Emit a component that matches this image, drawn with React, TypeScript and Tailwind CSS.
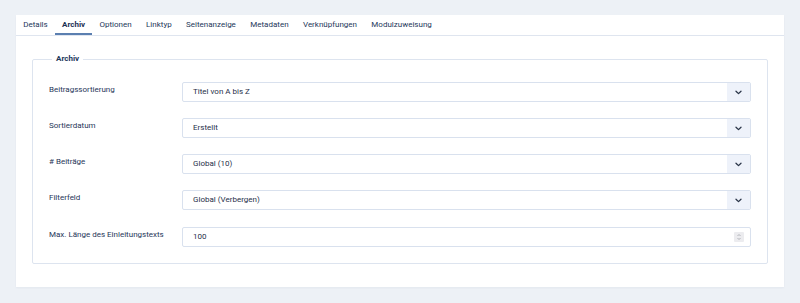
import React, { useState } from 'react';

const tabs = ['Details', 'Archiv', 'Optionen', 'Linktyp', 'Seitenanzeige', 'Metadaten', 'Verknüpfungen', 'Modulzuweisung'];

interface Field {
  label: string;
  value: string;
  kind: 'select' | 'number';
}

const fields: Field[] = [
  { label: 'Beitragssortierung', value: 'Titel von A bis Z', kind: 'select' },
  { label: 'Sortierdatum', value: 'Erstellt', kind: 'select' },
  { label: '# Beiträge', value: 'Global (10)', kind: 'select' },
  { label: 'Filterfeld', value: 'Global (Verbergen)', kind: 'select' },
  { label: 'Max. Länge des Einleitungstexts', value: '100', kind: 'number' },
];

const Chevron = () => (
  <svg width="7" height="5" viewBox="0 0 7 5" fill="none">
    <path d="M1 1.2l2.5 2.4L6 1.2" stroke="#2a3548" strokeWidth="1.3" strokeLinecap="round" strokeLinejoin="round" />
  </svg>
);

const Spinner = () => (
  <div className="flex h-[10px] w-[10px] flex-col items-center justify-center rounded-[1px] bg-[#ececef]">
    <svg width="6" height="8" viewBox="0 0 6 8" fill="none">
      <path d="M1.5 3l1.5-1.5L4.5 3" stroke="#9a9ca3" strokeWidth="0.7" />
      <path d="M1.5 5l1.5 1.5L4.5 5" stroke="#9a9ca3" strokeWidth="0.7" />
    </svg>
  </div>
);

export default function App() {
  const [active, setActive] = useState('Archiv');

  return (
    <div className="h-[303px] w-[800px] bg-[#edf1f6] px-4 pt-[15px] font-['Roboto','Liberation_Sans',sans-serif] text-[#22375a]">
      <div className="h-[272px] w-[768px] bg-white shadow-[0_1px_2px_rgba(30,50,90,0.05)]">
        {/* Tabs */}
        <div className="flex h-[21px] border-b border-[#dfe5ef]">
          {tabs.map((t) => (
            <button
              key={t}
              onClick={() => setActive(t)}
              className={`relative flex h-full items-center px-[7.2px] text-[8px] leading-[10px] ${
                active === t ? 'font-bold text-[#1c3052]' : 'text-[#24375a]'
              }`}
            >
              {t}
              {active === t && <span className="absolute inset-x-0 bottom-0 h-[2px] bg-[#5b7fb0]" />}
            </button>
          ))}
        </div>

        {/* Fieldset */}
        <div className="px-4 pt-[18px]">
          <fieldset className="rounded-[2px] border border-[#dde4ef] px-4 pb-4 pt-[18px]">
            <legend className="ml-[3px] px-[4px] text-[8px] font-bold leading-[10px] text-[#22375a]">Archiv</legend>
            <div className="flex flex-col gap-4">
              {fields.map((f, i) => (
                <div key={f.label} className={`flex items-start ${i === 4 ? 'mt-px' : ''}`}>
                  <label className="w-[133px] shrink-0 pt-[3px] text-[8px] leading-[10px] text-[#1f3659]">{f.label}</label>
                  <div className="flex h-[20px] flex-1 items-center overflow-hidden rounded-[2px] border border-[#d9e1ee] bg-white">
                    <span className="flex-1 pl-[10px] text-[8px] leading-[10px] text-[#1f2f4a]">{f.value}</span>
                    {f.kind === 'select' ? (
                      <span className="flex h-full w-[23px] items-center justify-center bg-[#eef2fa]">
                        <Chevron />
                      </span>
                    ) : (
                      <span className="flex h-full w-[23px] items-center justify-center">
                        <Spinner />
                      </span>
                    )}
                  </div>
                </div>
              ))}
            </div>
          </fieldset>
        </div>
      </div>
    </div>
  );
}
